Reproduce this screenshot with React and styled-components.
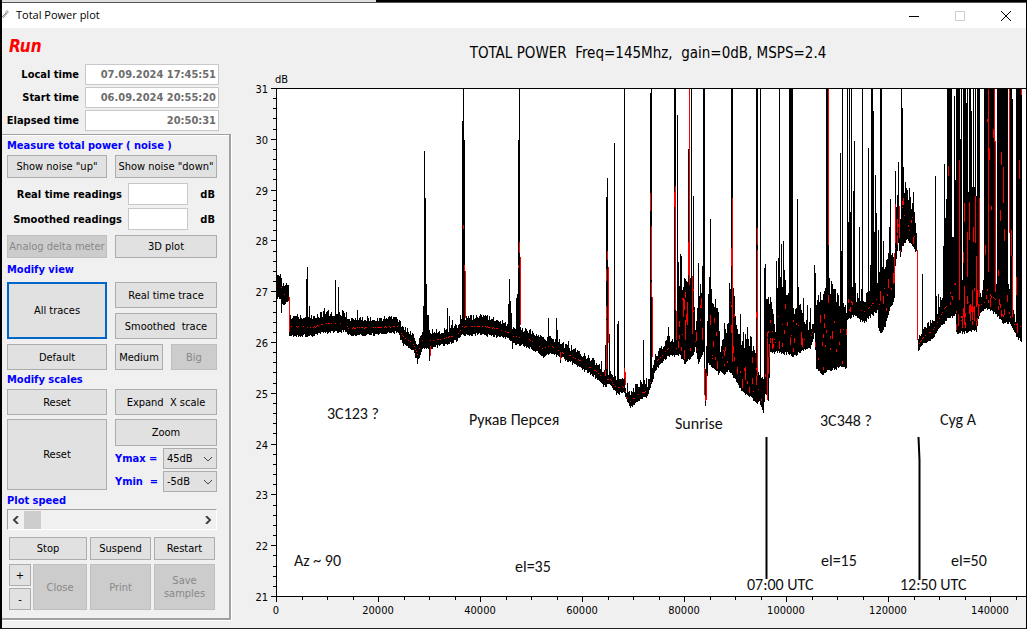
import React, { useState } from "react";
import styled, { createGlobalStyle } from "styled-components";

const GlobalStyle = createGlobalStyle`
    * { box-sizing: border-box; }
    body {
        margin: 0;
        background: #f0f0f0;
        font-family: "DejaVu Sans Condensed", "DejaVu Sans", sans-serif;
        font-size: 11px;
        color: #000;
    }
`;

const Window = styled.div`
    display: flex;
    flex-direction: column;
    min-height: 100vh;
    background: #f0f0f0;
    border-left: 2px solid #000;
    border-right: 1px solid #000;
    border-bottom: 1px solid #222;
`;
const Backdrop = styled.div`
    height: 3px;
    border-bottom: 1px solid #555;
    background: linear-gradient(90deg, #e0e0e0 374px, #000 374px);
`;
const TitleBar = styled.header`
    display: flex;
    align-items: center;
    gap: 6px;
    height: 25px;
    background: #fff;
`;
const AppIcon = styled.svg`
    width: 8px;
    height: 14px;
`;
const TitleText = styled.span`
    flex: 1;
    line-height: 14px;
    padding-bottom: 2px;
    font-family: "Open Sans", "Noto Sans", sans-serif;
    font-size: 11px;
`;
const WindowButton = styled.button`
    display: flex;
    align-items: center;
    justify-content: center;
    width: 40px;
    height: 25px;
    padding: 0;
    border: 0;
    background: none;
    color: ${(props) => (props.disabled ? "#ccc" : "#000")};
`;
const Body = styled.div`
    display: flex;
    flex: 1;
    align-items: flex-start;
`;

const Sidebar = styled.aside`
    flex: none;
    width: 229px;
`;
const Status = styled.div`
    height: 36px;
    padding-left: 7px;
    line-height: 36px;
    font-size: 17px;
    font-weight: bold;
    font-style: italic;
    color: #f00;
`;
const Times = styled.div`
    display: flex;
    flex-direction: column;
    gap: 2px;
    margin-bottom: 3px;
    padding-right: 12px;
`;
const TimeRow = styled.label`
    display: grid;
    grid-template-columns: 1fr 134px;
    gap: 6px;
    align-items: center;
    text-align: right;
    font-weight: bold;
`;
const Field = styled.input`
    width: 100%;
    height: ${(props) => props.$height || 21}px;
    padding: 0 2px;
    border: 1px solid #c8c8c8;
    background: #fff;
    color: #6d6d6d;
    font: inherit;
    font-weight: bold;
    text-align: right;
`;

const Panel = styled.section`
    padding: 1px 12px 8px 5px;
    border: solid #a0a0a5;
    border-width: 1px 2px 2px 0;
    box-shadow: inset 0 1px 0 #fff, 1px 1px 0 #fff;
`;
const Heading = styled.h2`
    margin: 0;
    height: ${(props) => props.$height}px;
    line-height: ${(props) => props.$height}px;
    font-size: 11px;
    font-weight: bold;
    color: #00f;
`;
const Pair = styled.div`
    display: grid;
    grid-template-columns: 100px 1fr;
    gap: 5px 8px;
    align-items: start;
    margin-bottom: ${(props) => props.$after || 0}px;
`;
const Column = styled.div`
    display: flex;
    flex-direction: column;
    gap: ${(props) => props.$gap}px;
`;
const Split = styled.div`
    display: grid;
    grid-template-columns: 48px 46px;
    gap: 8px;
`;
const Button = styled.button`
    width: 100%;
    height: ${(props) => props.$height || 26}px;
    padding: 0;
    border: ${(props) => (props.$active ? "2px solid #0067c8" : "1px solid #adadad")};
    background: #e1e1e1;
    color: #000;
    font: inherit;
    white-space: pre;

    &:disabled {
        border-color: #bfbfbf;
        background: #ccc;
        color: #888;
    }
`;
const Readings = styled.div`
    display: flex;
    flex-direction: column;
    gap: 3px;
    margin-bottom: 5px;
`;
const Reading = styled.label`
    display: grid;
    grid-template-columns: 115px 60px 1fr;
    gap: 6px;
    align-items: center;
    text-align: right;
    font-weight: bold;
`;
const Unit = styled.span`
    padding-right: 2px;
`;
const ScaleRow = styled.label`
    display: grid;
    grid-template-columns: 1fr 54px;
    align-items: center;
    height: 21px;
    font-weight: bold;
    color: #00f;
    white-space: pre;
`;
const SelectBox = styled.span`
    display: grid;
    align-items: center;

    & > * { grid-area: 1 / 1; }
    svg { justify-self: end; margin-right: 4px; pointer-events: none; }
`;
const Select = styled.select`
    appearance: none;
    width: 100%;
    height: 21px;
    padding: 0 3px;
    border: 1px solid #adadad;
    border-radius: 0;
    background: #e1e1e1;
    color: #000;
    font: inherit;
    font-weight: normal;
`;
const Scroller = styled.div`
    display: flex;
    height: 21px;
    margin-bottom: 7px;
    border: 1px solid #fff;
    border-top-color: #a0a0a0;
    border-left-color: #a0a0a0;
`;
const Arrow = styled.button`
    display: flex;
    align-items: center;
    justify-content: center;
    width: 16px;
    padding: 0;
    border: 0;
    background: none;
`;
const Speed = styled.input`
    appearance: none;
    flex: 1;
    min-width: 0;
    height: 19px;
    margin: 0;
    background: none;

    &::-webkit-slider-thumb {
        appearance: none;
        width: 17px;
        height: 18px;
        background: #cdcdcd;
    }
`;
const Actions = styled.div`
    display: grid;
    grid-template-columns: 78px 61px 61px;
    gap: 4px 3px;
    padding-left: 2px;
`;
const CloseGroup = styled.div`
    display: grid;
    grid-template-columns: 22px 1fr;
    gap: 2px;
`;

const ChartArea = styled.main`
    flex: 1;
    min-width: 0;
    padding-left: 1px;
`;
const ChartTitle = styled.h1`
    margin: 0;
    height: 40px;
    padding: 12px 0 0 38px;
    text-align: center;
    line-height: 26px;
    font-size: 15px;
    font-weight: normal;
    white-space: pre;
`;
const Chart = styled.svg`
    display: block;
    width: 100%;
    height: auto;
`;
const AxisText = styled.text`
    font-size: 11px;
    text-anchor: ${(props) => props.$anchor || "start"};
`;
const NoteText = styled.text`
    font-family: "Carlito", "Noto Sans", "Open Sans", sans-serif;
    font-size: 16px;
    fill: #111;
`;

const TOP = 88;
const BOTTOM = 596;
const LEFT = 276;
const RIGHT = 1026;

// x, upper edge, lower edge, roughness of the upper edge
const ENVELOPE = [
    [276, 280, 296, 5], [281, 280, 297, 5], [282, 288, 303, 4], [288, 286, 301, 4],
    [289, 320, 334, 4], [313, 321, 334, 5], [325, 317, 331, 5], [346, 318, 330, 6],
    [348, 323, 334, 5], [375, 322, 333, 5], [397, 322, 331, 4], [403, 331, 343, 4],
    [413, 339, 349, 4], [417, 348, 361, 3], [422, 335, 347, 4], [430, 335, 347, 4],
    [440, 335, 344, 4], [457, 330, 339, 5], [462, 321, 333, 4], [480, 320, 333, 4],
    [497, 323, 335, 4], [507, 327, 337, 4], [513, 331, 342, 4], [530, 335, 346, 4],
    [543, 342, 355, 4], [550, 341, 351, 5], [563, 348, 357, 5], [580, 356, 366, 5],
    [597, 367, 377, 4], [603, 374, 385, 4], [610, 376, 383, 5], [616, 384, 392, 5],
    [624, 382, 392, 5], [626, 395, 399, 4], [630, 397, 406, 5], [637, 390, 400, 7],
    [647, 387, 395, 8], [651, 376, 384, 4], [655, 359, 369, 4], [667, 343, 355, 7],
    [676, 342, 354, 6], [679, 297, 355, 18], [685, 280, 363, 8], [693, 279, 355, 6],
    [695, 336, 347, 5], [698, 292, 363, 18], [703, 290, 353, 12], [705, 370, 404, 4],
    [708, 308, 363, 16], [712, 300, 366, 12], [718, 317, 373, 10], [720, 358, 371, 6],
    [724, 335, 373, 10], [728, 332, 370, 14], [730, 292, 372, 8], [734, 304, 377, 10],
    [737, 334, 384, 8], [743, 347, 392, 16], [753, 348, 399, 16], [757, 364, 403, 8],
    [759, 379, 401, 5], [763, 381, 412, 3], [765, 299, 392, 12], [768, 300, 402, 10],
    [770, 309, 352, 14], [775, 335, 351, 10], [777, 287, 352, 14], [784, 287, 353, 14],
    [788, 299, 353, 8], [794, 313, 356, 8], [798, 303, 353, 12], [804, 331, 348, 10],
    [810, 332, 346, 8], [814, 322, 333, 6], [816, 307, 367, 12], [822, 300, 374, 10],
    [828, 296, 370, 12], [839, 305, 367, 14], [846, 317, 367, 10], [847, 272, 320, 18],
    [852, 285, 316, 10], [854, 301, 315, 8], [864, 304, 321, 10], [870, 299, 315, 10],
    [877, 290, 310, 12], [878, 275, 327, 14], [881, 269, 333, 12], [885, 266, 326, 10],
    [889, 259, 309, 14], [894, 255, 299, 6], [895, 207, 266, 14], [898, 202, 242, 10],
    [900, 222, 256, 16], [902, 184, 246, 14], [907, 201, 239, 14], [913, 210, 247, 12],
    [916, 236, 250, 5], [918, 340, 350, 3], [923, 332, 343, 4], [933, 324, 336, 5],
    [943, 302, 322, 8], [948, 290, 318, 8], [955, 262, 315, 10], [956, 280, 333, 8],
    [976, 280, 330, 8], [979, 298, 314, 5], [984, 296, 308, 8], [986, 275, 308, 6],
    [995, 290, 312, 6], [1003, 290, 323, 6], [1009, 290, 322, 6], [1015, 325, 332, 5],
    [1017, 310, 336, 5], [1021, 320, 340, 4],
];

// x, peak, width
const SPIKES = [
    [306, 279], [307, 267], [309, 306], [324, 308], [335, 280], [338, 287], [357, 310],
    [423, 306], [424, 151], [425, 198], [426, 284], [427, 315, 2], [447, 308], [449, 316],
    [452, 320], [460, 315], [462, 121], [463, 88], [464, 140], [508, 304], [509, 279],
    [510, 301], [511, 313], [516, 298], [517, 294], [518, 140], [519, 88], [548, 318],
    [556, 318], [557, 330], [568, 341], [601, 361], [605, 345], [606, 197], [607, 178],
    [609, 334], [614, 143], [617, 324], [618, 321], [624, 88], [627, 383], [643, 340],
    [650, 93], [651, 88], [668, 327], [674, 88, 2], [677, 115], [678, 262], [679, 286],
    [680, 254], [681, 256], [688, 149], [689, 88], [691, 88], [693, 196], [698, 263],
    [702, 266], [703, 88, 2], [709, 277], [710, 219], [711, 289], [724, 323], [729, 283],
    [731, 88, 2], [733, 288], [740, 314], [747, 327], [756, 88, 2], [760, 88], [764, 268],
    [765, 264], [776, 261], [778, 258], [779, 88], [781, 244], [783, 241], [784, 270],
    [789, 88, 4], [797, 199], [798, 287], [803, 298], [807, 305], [810, 308], [814, 265],
    [815, 273], [826, 88, 3], [829, 278], [831, 281], [832, 284], [840, 153], [841, 251],
    [842, 88], [847, 88], [848, 222], [849, 88], [850, 212], [851, 88], [853, 191],
    [854, 141], [855, 283], [859, 227], [861, 289], [862, 88], [868, 148], [870, 265],
    [871, 88, 2], [873, 111], [874, 232], [875, 175], [876, 213], [878, 230], [880, 88, 2],
    [883, 241], [889, 227], [890, 199], [895, 171], [898, 162], [901, 88], [902, 108],
    [903, 167], [905, 182], [909, 188], [913, 192], [922, 274], [935, 176], [936, 296],
    [938, 294], [940, 297], [943, 246], [944, 164], [945, 218], [946, 199], [947, 88, 5],
    [952, 237, 2], [954, 96], [955, 180], [956, 88, 4], [960, 139], [961, 88], [963, 88, 3],
    [966, 103], [967, 88], [968, 192], [969, 88, 2], [971, 111], [972, 187], [973, 88],
    [974, 187], [975, 88], [976, 196], [977, 88, 3], [983, 280], [984, 88, 11],
    [997, 88, 11], [1010, 88, 2], [1012, 99], [1016, 88, 6],
];

// x, from, to
const DIPS = [[281, 296, 313], [417, 350, 362], [429, 346, 361], [512, 340, 349], [560, 350, 363], [705, 375, 406]];

const SMOOTHED = [
    [289, 297, 332], [430, 346, 356], [463, 225, 229], [464, 265, 271], [465, 271, 318],
    [519, 242, 253], [518, 265, 268], [520, 257, 325], [560, 352, 360], [606, 269, 281],
    [607, 251, 260], [608, 267, 343], [606, 306, 319], [606, 320, 369], [605, 370, 376],
    [624, 368, 378], [625, 372, 385], [650, 193, 211], [651, 226, 280], [651, 282, 297],
    [652, 297, 357], [674, 192, 207], [675, 186, 310], [676, 311, 340], [689, 88, 285],
    [688, 242, 275], [692, 276, 334], [683, 298, 317], [687, 302, 325], [685, 320, 340],
    [701, 298, 308], [704, 368, 395], [706, 373, 400], [732, 198, 362], [731, 248, 266],
    [757, 228, 245], [757, 250, 376], [756, 312, 318], [767, 338, 400], [769, 344, 357],
    [828, 88, 245], [828, 295, 303], [894, 253, 283], [895, 204, 243], [899, 206, 238],
    [917, 250, 340], [948, 166, 176], [959, 160, 300], [964, 203, 222], [967, 232, 277],
    [969, 202, 240], [973, 227, 242], [975, 196, 243], [976, 256, 307], [979, 198, 297],
    [988, 88, 272], [987, 119, 122], [989, 148, 160], [993, 129, 138], [994, 88, 142],
    [995, 141, 292], [1001, 152, 165], [1003, 167, 203], [1000, 210, 221], [1004, 229, 241],
    [1009, 88, 233], [1011, 230, 256], [1012, 256, 317], [1019, 160, 179], [1021, 88, 95],
    [1016, 277, 295], [985, 245, 255], [991, 206, 210], [998, 270, 276], [963, 252, 263],
    [977, 290, 305], [964, 286, 325], [972, 290, 320], [1007, 295, 302],
];

function makeRandom(seed) {
    let state = seed;
    return () => {
        state = (state * 1103515245 + 12345) % 2147483648;
        return state / 2147483648;
    };
}

function edgesAt(x) {
    const next = ENVELOPE.findIndex((point) => point[0] > x);
    if (next === -1) return ENVELOPE[ENVELOPE.length - 1].slice(1);
    const a = ENVELOPE[next - 1];
    const b = ENVELOPE[next];
    const t = (x - a[0]) / (b[0] - a[0]);
    return [1, 2, 3].map((i) => a[i] + (b[i] - a[i]) * t);
}

function bar(x, from, to) {
    return `M${x} ${Math.round(from)}h1V${Math.round(to)}h-1z`;
}

function buildTraces() {
    const random = makeRandom(77);
    let raw = "";
    let smooth = "";
    const floor = {};
    for (let x = LEFT; x <= 1021; x++) {
        const [high, low, rough] = edgesAt(x);
        const span = low - high;
        const quiet = span < 26;
        const top = high - (random() * 1.3 - 0.3) * rough - (quiet ? 2 : 0);
        const bottom = low + random() * 3 - (quiet ? 0 : 1);
        floor[x] = bottom;
        raw += bar(x, top, bottom);
        if (quiet) {
            if (random() < 0.4) {
                const y = high + span * 0.4 + random();
                smooth += bar(x, y, y + 1);
            }
        } else {
            for (let i = 0; i < 2; i++) {
                if (random() < 0.4) {
                    const y = high + 8 + random() * (span - 14);
                    smooth += bar(x, y, Math.min(y + 1 + random() * random() * 16, low - 3));
                }
            }
        }
    }
    SPIKES.forEach(([x, peak, width = 1]) => {
        for (let i = x; i < x + width && i <= 1021; i++) raw += bar(i, peak, floor[i] - 2);
    });
    DIPS.forEach(([x, from, to]) => {
        raw += bar(x, from, to);
    });
    SMOOTHED.forEach(([x, from, to]) => {
        smooth += bar(x, from, to);
    });
    return { raw, smooth };
}

const traces = buildTraces();

const NOTES = [
    [327, 419, "3C123 ?"], [469, 425, "Рукав Персея"], [675, 429, "Sunrise"],
    [820, 426, "3C348 ?"], [940, 425, "Cyg A"], [294, 566, "Az ~ 90"],
    [515, 572, "el=35"], [821, 566, "el=15"], [951, 566, "el=50"],
    [747, 590, "07:00 UTC"], [900, 590, "12:50 UTC"],
];

const PowerChart = () => {
    const yTicks = Array.from({ length: 51 }, (_, i) => i);
    const xTicks = Array.from({ length: 30 }, (_, i) => i);
    return (
        <Chart viewBox="232 68 794 552" role="img" aria-label="Total power plot">
            <rect x={LEFT} y={TOP} width={RIGHT - LEFT} height={BOTTOM - TOP} fill="#fff" />
            <g shapeRendering="crispEdges">
                <path d={traces.raw} fill="#000" />
                <path d={traces.smooth} fill="#f00" />
                <rect x={LEFT} y={TOP} width={RIGHT - LEFT} height="1" />
                <rect x={LEFT} y={BOTTOM} width={RIGHT - LEFT} height="1" />
                <rect x={LEFT} y={TOP} width="1" height={BOTTOM - TOP} />
                {yTicks.map((i) => {
                    const length = i % 5 === 0 ? 5 : 3;
                    return <rect key={i} x={LEFT - length} y={Math.round(TOP + i * 10.16)} width={length} height="1" />;
                })}
                {xTicks.map((i) => (
                    <rect key={i} x={Math.round(LEFT + i * 25.5)} y={BOTTOM} width="1" height={i % 4 === 0 ? 6 : 4} />
                ))}
            </g>
            {yTicks.filter((i) => i % 5 === 0).map((i) => (
                <AxisText key={i} x="268" y={Math.round(TOP + i * 10.16) + 5} $anchor="end">{31 - i / 5}</AxisText>
            ))}
            {xTicks.filter((i) => i % 4 === 0).map((i) => (
                <AxisText key={i} x={LEFT + i * 25.5} y="614" $anchor="middle">{i * 5000}</AxisText>
            ))}
            <AxisText x="275" y="83">dB</AxisText>
            <path d="M766.5 437V579" stroke="#000" strokeWidth="2" />
            <path d="M918.5 437L919.5 460V580" stroke="#000" strokeWidth="2" fill="none" />
            {NOTES.map(([x, y, text]) => (
                <NoteText key={text} x={x} y={y}>{text}</NoteText>
            ))}
        </Chart>
    );
};

const ScaleSelect = ({ label, value }) => (
    <ScaleRow>
        {label}
        <SelectBox>
            <Select defaultValue={value}>
                <option>{value}</option>
            </Select>
            <svg width="10" height="6" viewBox="0 0 10 6">
                <path d="M1 1L5 5L9 1" fill="none" stroke="#444" />
            </svg>
        </SelectBox>
    </ScaleRow>
);

const App = () => {
    const [speed, setSpeed] = useState(0);

    return (
        <Window>
            <GlobalStyle />
            <Backdrop />
            <TitleBar>
                <AppIcon viewBox="0 0 8 14">
                    <path d="M0 8L4 4M1 9L5 4" stroke="#888" />
                    <path d="M3 3H7M5 1V5" stroke="#aaa" />
                </AppIcon>
                <TitleText>Total Power plot</TitleText>
                <WindowButton aria-label="Minimize">
                    <svg width="10" height="10"><path d="M0 5.5H10" stroke="currentColor" /></svg>
                </WindowButton>
                <WindowButton aria-label="Maximize" disabled>
                    <svg width="10" height="10"><path d="M.5 .5H9.5V9.5H.5Z" fill="none" stroke="currentColor" /></svg>
                </WindowButton>
                <WindowButton aria-label="Close window">
                    <svg width="10" height="10"><path d="M0 0L10 10M10 0L0 10" stroke="currentColor" /></svg>
                </WindowButton>
            </TitleBar>
            <Body>
                <Sidebar>
                    <Status>Run</Status>
                    <Times>
                        <TimeRow>Local time<Field readOnly value="07.09.2024 17:45:51" /></TimeRow>
                        <TimeRow>Start time<Field readOnly value="06.09.2024 20:55:20" /></TimeRow>
                        <TimeRow>Elapsed time<Field readOnly value="20:50:31" /></TimeRow>
                    </Times>
                    <Panel>
                        <Heading $height={19}>Measure total power ( noise )</Heading>
                        <Pair $after={5}>
                            <Button $height={23}>Show noise "up"</Button>
                            <Button $height={23}>Show noise "down"</Button>
                        </Pair>
                        <Readings>
                            <Reading>Real time readings<Field $height={22} /><Unit>dB</Unit></Reading>
                            <Reading>Smoothed readings<Field $height={22} /><Unit>dB</Unit></Reading>
                        </Readings>
                        <Pair>
                            <Button $height={23} disabled>Analog delta meter</Button>
                            <Button $height={23}>3D plot</Button>
                        </Pair>
                        <Heading $height={24}>Modify view</Heading>
                        <Pair>
                            <Button $height={57} $active>All traces</Button>
                            <Column $gap={5}>
                                <Button>Real time trace</Button>
                                <Button>{"Smoothed  trace"}</Button>
                            </Column>
                            <Button>Default</Button>
                            <Split>
                                <Button>Medium</Button>
                                <Button disabled>Big</Button>
                            </Split>
                        </Pair>
                        <Heading $height={19}>Modify scales</Heading>
                        <Pair $after={4}>
                            <Button>Reset</Button>
                            <Button>{"Expand  X scale"}</Button>
                        </Pair>
                        <Pair>
                            <Button $height={71}>Reset</Button>
                            <Column $gap={2}>
                                <Button $height={27}>Zoom</Button>
                                <ScaleSelect label="Ymax =" value="45dB" />
                                <ScaleSelect label="Ymin  =" value="-5dB" />
                            </Column>
                        </Pair>
                        <Heading $height={17}>Plot speed</Heading>
                        <Scroller>
                            <Arrow aria-label="Slower" onClick={() => setSpeed(Math.max(0, speed - 1))}>
                                <svg width="6" height="8"><path d="M5 0L1 4L5 8" fill="none" stroke="#444" strokeWidth="2" /></svg>
                            </Arrow>
                            <Speed type="range" min="0" max="10" value={speed} aria-label="Plot speed" onChange={(e) => setSpeed(Number(e.target.value))} />
                            <Arrow aria-label="Faster" onClick={() => setSpeed(Math.min(10, speed + 1))}>
                                <svg width="6" height="8"><path d="M1 0L5 4L1 8" fill="none" stroke="#444" strokeWidth="2" /></svg>
                            </Arrow>
                        </Scroller>
                        <Actions>
                            <Button $height={23}>Stop</Button>
                            <Button $height={23}>Suspend</Button>
                            <Button $height={23}>Restart</Button>
                            <CloseGroup>
                                <Column $gap={2}>
                                    <Button $height={22}>+</Button>
                                    <Button $height={22}>-</Button>
                                </Column>
                                <Button $height={46} disabled>Close</Button>
                            </CloseGroup>
                            <Button $height={46} disabled>Print</Button>
                            <Button $height={46} disabled>{"Save\nsamples"}</Button>
                        </Actions>
                    </Panel>
                </Sidebar>
                <ChartArea>
                    <ChartTitle>{"TOTAL POWER  Freq=145Mhz,  gain=0dB, MSPS=2.4"}</ChartTitle>
                    <PowerChart />
                </ChartArea>
            </Body>
        </Window>
    );
};

export default App;
